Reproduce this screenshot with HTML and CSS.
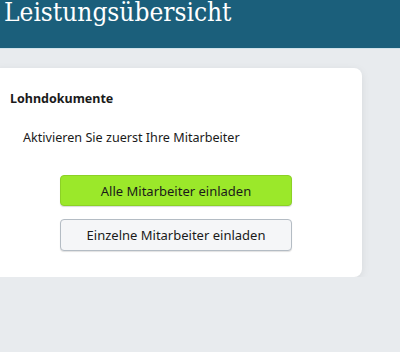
FILE: index.html
```html
<!DOCTYPE html>
<html lang="de">
<head>
    <meta charset="UTF-8">
    <meta name="viewport" content="width=device-width, initial-scale=1.0">
    <title>Leistungsübersicht</title>
    <link rel="stylesheet" href="styles.css">
</head>
<body>
    <header class="topbar">
        <h1 class="page-title">Leistungsübersicht</h1>
    </header>
    <main class="content">
        <div class="card">
            <h2 class="card-title">Lohndokumente</h2>
            <p class="card-text">Aktivieren Sie zuerst Ihre Mitarbeiter</p>
            <div class="actions">
                <button class="btn btn-primary">Alle Mitarbeiter einladen</button>
                <button class="btn btn-default">Einzelne Mitarbeiter einladen</button>
            </div>
        </div>
    </main>
</body>
</html>
```

FILE: styles.css
```css
body {
    margin: 0;
    font-family: "Noto Sans", "Open Sans", sans-serif;
    background-color: #e8ebee;
    color: #1a1a1a;
    overflow: hidden;
}
.topbar {
    background-color: #1b5f7b;
    height: 48px;
    border-bottom: 1px solid #cfe2ea;
}
.page-title {
    margin: 0;
    padding-left: 4px;
    font-family: "DejaVu Serif", serif;
    font-stretch: condensed;
    font-weight: normal;
    font-size: 26px;
    line-height: 24px;
    color: #fff;
}
.content {
    padding-top: 19px;
}
.card {
    margin: 0 38px 0 -10px;
    background-color: #fff;
    border-radius: 8px;
    box-shadow: 0 2px 8px rgba(0, 0, 0, 0.08);
    padding: 21px 20px 26px 20px;
}
.card-title {
    margin: 0;
    font-size: 12.5px;
    font-weight: bold;
    line-height: 20px;
}
.card-text {
    margin: 19px 0 0 13px;
    font-size: 12.6px;
    line-height: 20px;
}
.actions {
    display: flex;
    flex-direction: column;
    align-items: center;
    gap: 13px;
    margin-top: 27px;
}
.btn {
    width: 232px;
    height: 31px;
    font-family: "Noto Sans", "Open Sans", sans-serif;
    font-size: 13px;
    color: #1a1a1a;
    border-radius: 4px;
    cursor: pointer;
}
.btn-primary {
    background-color: #9be82a;
    border: 1px solid #8cd126;
    box-shadow: 0 1px 1px rgba(0, 0, 0, 0.15);
}
.btn-default {
    height: 32px;
    background-color: #f5f6f8;
    border: 1px solid #b4bcc4;
    box-shadow: 0 1px 1px rgba(0, 0, 0, 0.12);
}
```
